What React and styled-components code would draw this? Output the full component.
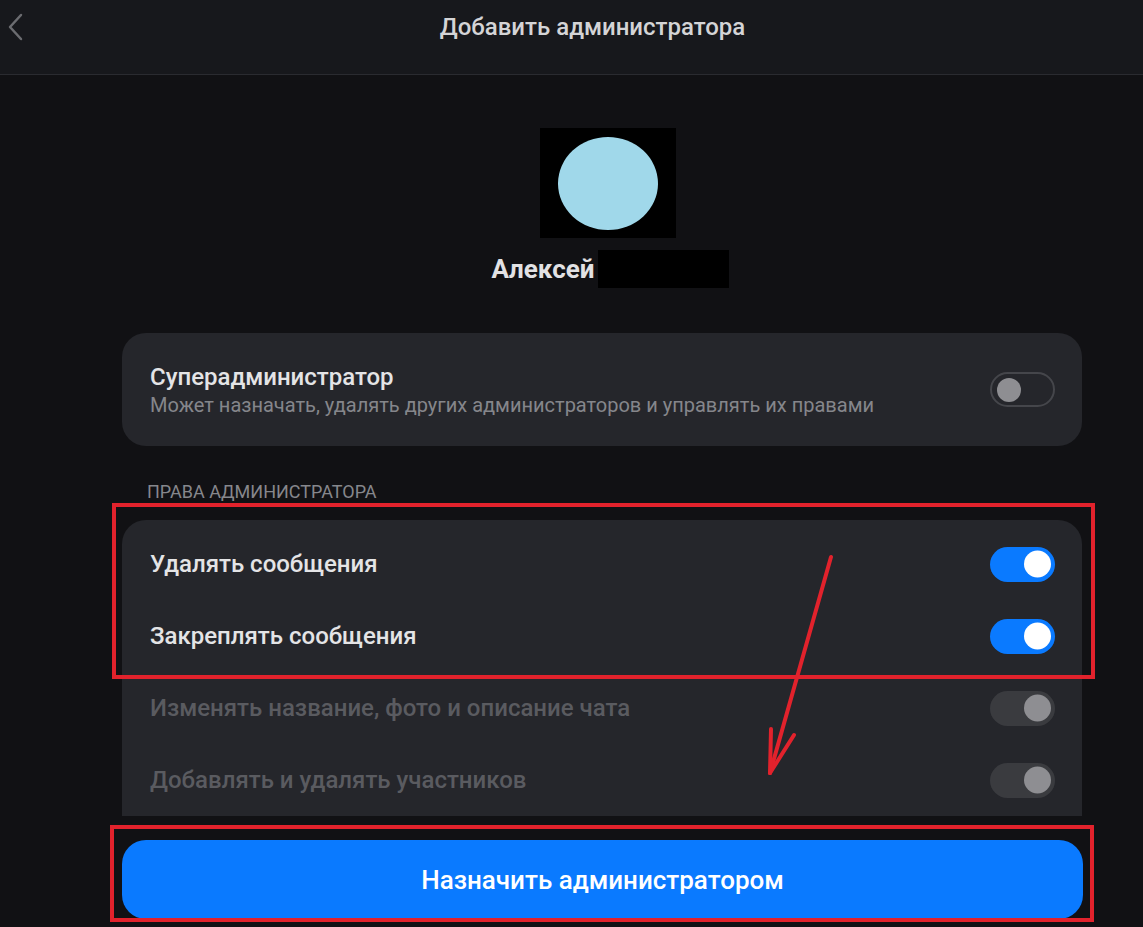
import React from "react";
import styled, { createGlobalStyle } from "styled-components";

const Global = createGlobalStyle`
  html, body {
    margin: 0;
    padding: 0;
    background: #111114;
    overflow: hidden;
  }
  * { box-sizing: border-box; }
`;

const Pagina = styled.div`
  position: relative;
  width: 1143px;
  height: 927px;
  background: #111114;
  font-family: Roboto, "Noto Sans", sans-serif;
  overflow: hidden;
`;

const Cabecera = styled.header`
  height: 75px;
  background: #17181c;
  border-bottom: 1px solid #2a2b30;
  display: flex;
  align-items: flex-start;
  padding-top: 12px;
`;

const Atras = styled.button`
  background: none;
  border: none;
  padding: 0;
  margin-left: 6px;
  width: 20px;
  height: 30px;
  cursor: pointer;
`;

const TituloCabecera = styled.h1`
  flex: 1;
  margin: 0 0 0 16px;
  text-align: center;
  font-size: 24px;
  font-weight: 500;
  color: #d4d4d6;
  line-height: 30px;
`;

const Contenido = styled.main`
  width: 960px;
  margin-left: 122px;
  display: flex;
  flex-direction: column;
`;

const Avatar = styled.div`
  align-self: center;
  margin-top: 53px;
  margin-left: 12px;
  width: 136px;
  height: 110px;
  background: #000;
  display: flex;
  align-items: center;
  justify-content: center;
`;

const Circulo = styled.div`
  width: 100px;
  height: 93px;
  border-radius: 50%;
  background: #a0d8ea;
`;

const FilaNombre = styled.div`
  align-self: center;
  margin-left: 16px;
  margin-top: 12px;
  display: flex;
  align-items: center;
  gap: 3px;
`;

const Nombre = styled.span`
  font-size: 26px;
  font-weight: 700;
  color: #e2e2e4;
`;

const Oculto = styled.span`
  width: 131px;
  height: 38px;
  background: #000;
`;

const Tarjeta = styled.section`
  background: #25262b;
  border-radius: ${(p) => (p.$abierta ? "24px 24px 0 0" : "24px")};
  padding: ${(p) => (p.$abierta ? "8px 27px 0 28px" : "0 27px 0 28px")};
  margin-top: ${(p) => p.$arriba || 0}px;
`;

const Fila = styled.div`
  display: flex;
  align-items: center;
  justify-content: space-between;
  height: ${(p) => p.$alto || 72}px;
`;

const Textos = styled.div`
  display: flex;
  flex-direction: column;
  gap: 2px;
`;

const Etiqueta = styled.span`
  font-size: 24px;
  font-weight: 500;
  color: ${(p) => (p.$apagado ? "#5a5b60" : "#e4e4e6")};
`;

const Subtitulo = styled.span`
  font-size: 20px;
  color: #85868b;
`;

const Seccion = styled.div`
  margin-top: 35px;
  margin-bottom: 18px;
  padding-left: 25px;
  font-size: 18px;
  line-height: 21px;
  color: #86878c;
`;

const Interruptor = styled.div`
  width: 65px;
  height: 35px;
  border-radius: 18px;
  position: relative;
  flex-shrink: 0;
  background: ${(p) =>
    p.$estado === "on" ? "#0a7aff" : p.$estado === "off" ? "transparent" : "#3a3b3f"};
  border: ${(p) => (p.$estado === "off" ? "2px solid #45464b" : "none")};
`;

const Perilla = styled.span`
  position: absolute;
  top: 50%;
  transform: translateY(-50%);
  width: ${(p) => (p.$estado === "off" ? 24 : 27)}px;
  height: ${(p) => (p.$estado === "off" ? 24 : 27)}px;
  border-radius: 50%;
  background: ${(p) => (p.$estado === "on" ? "#ffffff" : "#8e8e92")};
  left: ${(p) => (p.$estado === "off" ? "5px" : "auto")};
  right: ${(p) => (p.$estado === "off" ? "auto" : "4px")};
`;

const Boton = styled.button`
  margin-top: 24px;
  height: 79px;
  width: 961px;
  border: none;
  border-radius: 24px;
  background: #0a7aff;
  color: #ffffff;
  font-family: Roboto, "Noto Sans", sans-serif;
  font-size: 26px;
  font-weight: 500;
  cursor: pointer;
`;

const Marco = styled.div`
  position: absolute;
  border: 4px solid #e2222c;
  pointer-events: none;
`;

const Flecha = styled.svg`
  position: absolute;
  left: 0;
  top: 0;
  pointer-events: none;
`;

const Toggle = ({ estado }) => (
  <Interruptor $estado={estado}>
    <Perilla $estado={estado} />
  </Interruptor>
);

const permisos = [
  { texto: "Удалять сообщения", estado: "on" },
  { texto: "Закреплять сообщения", estado: "on" },
  { texto: "Изменять название, фото и описание чата", estado: "dis" },
  { texto: "Добавлять и удалять участников", estado: "dis" },
];

const App = () => {
  return (
    <Pagina>
      <Global />
      <Cabecera>
        <Atras aria-label="Назад">
          <svg width="20" height="30" viewBox="0 0 20 30">
            <path d="M15 3 L4 15 L15 27" fill="none" stroke="#6b6c70" strokeWidth="2.5" strokeLinecap="round" strokeLinejoin="round" />
          </svg>
        </Atras>
        <TituloCabecera>Добавить администратора</TituloCabecera>
      </Cabecera>
      <Contenido>
        <Avatar>
          <Circulo />
        </Avatar>
        <FilaNombre>
          <Nombre>Алексей</Nombre>
          <Oculto />
        </FilaNombre>
        <Tarjeta $arriba={45}>
          <Fila $alto={113}>
            <Textos>
              <Etiqueta>Суперадминистратор</Etiqueta>
              <Subtitulo>Может назначать, удалять других администраторов и управлять их правами</Subtitulo>
            </Textos>
            <Toggle estado="off" />
          </Fila>
        </Tarjeta>
        <Seccion>ПРАВА АДМИНИСТРАТОРА</Seccion>
        <Tarjeta $abierta>
          {permisos.map((p) => (
            <Fila key={p.texto}>
              <Etiqueta $apagado={p.estado === "dis"}>{p.texto}</Etiqueta>
              <Toggle estado={p.estado} />
            </Fila>
          ))}
        </Tarjeta>
        <Boton>Назначить администратором</Boton>
      </Contenido>

      <Marco style={{ left: 112, top: 503, width: 983, height: 176 }} />
      <Marco style={{ left: 110, top: 825, width: 984, height: 97 }} />
      <Flecha width="1143" height="927">
        <g stroke="#e2222c" strokeWidth="4" strokeLinecap="round" fill="none">
          <line x1="831" y1="557" x2="770" y2="773" />
          <line x1="770" y1="773" x2="771" y2="729" />
          <line x1="770" y1="773" x2="794" y2="735" />
        </g>
      </Flecha>
    </Pagina>
  );
};

export default App;
